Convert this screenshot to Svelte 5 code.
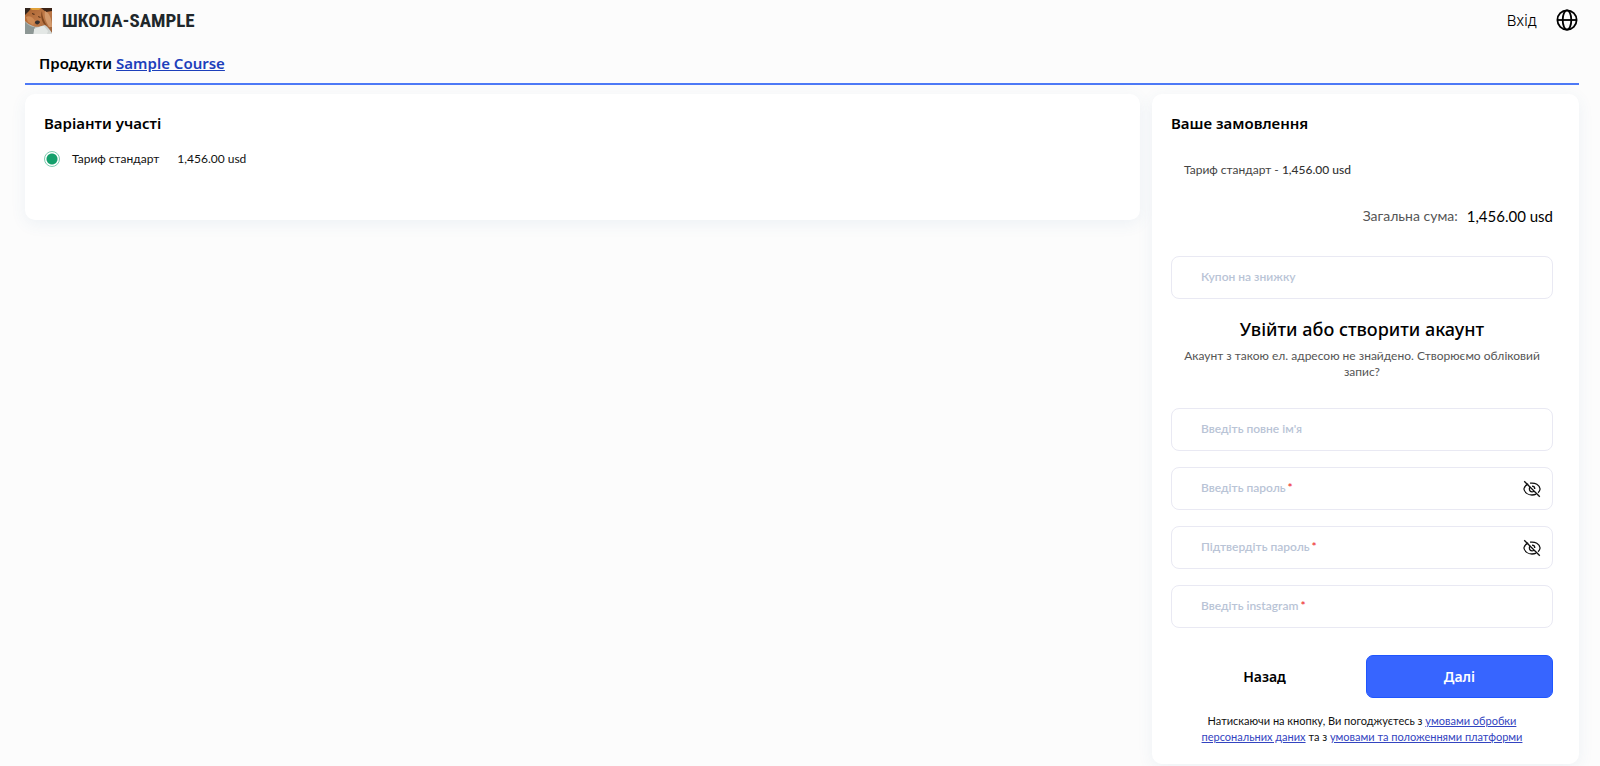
<script>
  let coupon = $state('');
  let plan = $state('standard');
  let values = $state({ name: '', password: '', confirm: '', instagram: '' });
  let visible = $state({ password: false, confirm: false });

  const fields = [
    { id: 'name', label: "Введіть повне ім'я", required: false, secret: false },
    { id: 'password', label: 'Введіть пароль', required: true, secret: true },
    { id: 'confirm', label: 'Підтвердіть пароль', required: true, secret: true },
    { id: 'instagram', label: 'Введіть instagram', required: true, secret: false }
  ];
</script>

<div class="page">
  <header class="topbar">
    <a class="brand" href="#home">
      <svg class="photo" viewBox="0 0 27 26" aria-hidden="true">
        <defs>
          <linearGradient id="fur" x1="0" y1="0" x2="1" y2="1">
            <stop offset="0" stop-color="#a9622f" />
            <stop offset="0.5" stop-color="#c07a48" />
            <stop offset="1" stop-color="#9a6038" />
          </linearGradient>
          <linearGradient id="cloth" x1="0" y1="0" x2="1" y2="1">
            <stop offset="0" stop-color="#9aa3a1" />
            <stop offset="1" stop-color="#d9dddb" />
          </linearGradient>
        </defs>
        <rect width="27" height="26" fill="url(#cloth)" />
        <path d="M0 0H27V25C25 22 23 19 20 17C16 18 12 20 8 18C5 17 2 15 0 13Z" fill="url(#fur)" />
        <path d="M0 0H6L4 3L2 5L0 7Z" fill="#33261e" />
        <path d="M5 0H16L14 2L7 2Z" fill="#e0a13a" />
        <path d="M16 0H27V3L21 4Z" fill="#3c2417" />
        <path d="M20 3C24 5 27 10 27 19L24 19C21 14 19 9 20 3Z" fill="#d39a6c" />
        <path d="M17 3C17 8 19 13 22 18L19 16C17 13 15 8 17 3Z" fill="#80471f" />
        <path d="M1 9C4 7 8 9 10 13L8 17L3 14Z" fill="#cf8b55" />
        <path d="M10 14C11 12 14 12 15 14C14 17 11 17 10 15Z" fill="#37302f" />
        <path d="M7 5L10 6L9 7L7 6Z" fill="#573019" />
        <path d="M13 8L16 9L15 10L13 9Z" fill="#6b3c1d" />
        <path d="M0 14C4 18 7 19 10 19L8 26H0Z" fill="#8d9795" />
        <path d="M9 21C12 20 15 18 19 18L23 23L22 26H9Z" fill="#e3e7e5" />
      </svg>
      <span>ШКОЛА-SAMPLE</span>
    </a>
    <div class="actions">
      <a class="login" href="#login">Вхід</a>
      <button class="icon" type="button" aria-label="Мова">
        <svg class="globe" viewBox="0 0 22 22" aria-hidden="true">
          <g fill="none" stroke="#000" stroke-width="1.8">
            <circle cx="11" cy="11" r="9.6" />
            <ellipse cx="11" cy="11" rx="4.3" ry="9.6" />
            <path d="M1.4 11H20.6" />
          </g>
        </svg>
      </button>
    </div>
  </header>

  <nav class="crumbs">Продукти <a href="#course">Sample Course</a></nav>

  <main class="columns">
    <section class="card options">
      <h2>Варіанти участі</h2>
      <label class="plan">
        <input type="radio" name="plan" value="standard" bind:group={plan} />
        <span>Тариф стандарт</span>
        <span>1,456.00 usd</span>
      </label>
    </section>

    <section class="card order">
      <h2>Ваше замовлення</h2>
      <p class="item">Тариф стандарт - <span>1,456.00 usd</span></p>
      <p class="total"><span>Загальна сума:</span> <strong>1,456.00 usd</strong></p>

      <div class="field">
        <input id="coupon" type="text" placeholder=" " bind:value={coupon} />
        <label for="coupon">Купон на знижку</label>
      </div>

      <h3>Увійти або створити акаунт</h3>
      <p class="hint">Акаунт з такою ел. адресою не знайдено. Створюємо обліковий запис?</p>

      <form onsubmit={(e) => e.preventDefault()}>
        {#each fields as f (f.id)}
          <div class="field">
            <input
              id={f.id}
              type={f.secret && !visible[f.id] ? 'password' : 'text'}
              placeholder=" "
              bind:value={values[f.id]}
            />
            <label for={f.id}>{f.label}{#if f.required}<i>*</i>{/if}</label>
            {#if f.secret}
              <button
                class="icon eye"
                type="button"
                aria-label="Показати пароль"
                onclick={() => (visible[f.id] = !visible[f.id])}
              >
                <svg viewBox="0 0 18 18" aria-hidden="true">
                  <g fill="none" stroke="#111" stroke-width="1.3">
                    <path d="M5.2 3.9C2.9 5 1.3 6.8 .9 9C1.6 12.6 5 15 9 15C10.5 15 11.9 14.7 13.1 14.1" />
                    <path d="M7 3.2C12.3 2.4 16.5 5 17.1 9C16.9 10.4 16.2 11.7 15.1 12.7" />
                    <path d="M7.3 6.8C5.5 8.6 6.4 11.8 9 11.9C9.8 11.9 10.5 11.6 11 11.1M9 6.2C10.7 6.2 11.8 7.5 11.8 9" />
                    <path d="M1.2 1.2L16.8 16.8" />
                  </g>
                </svg>
              </button>
            {/if}
          </div>
        {/each}

        <div class="buttons">
          <button class="back" type="button">Назад</button>
          <button class="next" type="submit">Далі</button>
        </div>
      </form>

      <p class="terms">
        Натискаючи на кнопку, Ви погоджуєтесь з <a href="#privacy">умовами обробки персональних даних</a>
        та з <a href="#terms">умовами та положеннями платформи</a>
      </p>
    </section>
  </main>
</div>

<style>
  :global(body) {
    margin: 0;
    background: #fcfcfc;
  }
  .page {
    box-sizing: border-box;
    padding: 0 21px 3px 25px;
    font: 12px/16px Lato, 'Noto Sans', sans-serif;
    color: #111;
  }
  .page * {
    box-sizing: border-box;
  }
  h2,
  h3,
  p {
    margin: 0;
  }
  .topbar {
    display: flex;
    justify-content: space-between;
    align-items: center;
    height: 42px;
  }
  .brand {
    display: flex;
    align-items: center;
    gap: 10px;
    color: #20272b;
    text-decoration: none;
    font: bold 19px/26px 'Liberation Sans Narrow', 'Roboto Condensed', 'Liberation Sans', sans-serif;
  }
  .photo {
    width: 27px;
    height: 26px;
  }
  .actions {
    display: flex;
    align-items: center;
    gap: 19px;
    padding: 0 1px 3px 0;
  }
  .login {
    padding-top: 3px;
    font: 300 15px/20px Inter, sans-serif;
    color: #000;
    text-decoration: none;
  }
  .icon {
    display: flex;
    padding: 0;
    border: 0;
    background: none;
    cursor: pointer;
  }
  .globe {
    width: 22px;
    height: 22px;
  }
  .crumbs {
    height: 43px;
    padding: 11px 14px;
    border-bottom: 2px solid #4d79f6;
    font: 600 15px/20px 'Noto Sans', sans-serif;
    color: #000;
  }
  .crumbs a {
    color: #1d3fbb;
  }
  .columns {
    display: grid;
    grid-template-columns: minmax(0, 1115fr) minmax(0, 427fr);
    gap: 12px;
    align-items: start;
    padding-top: 9px;
  }
  .card {
    border-radius: 10px;
    background: #fff;
    box-shadow: 0 4px 16px rgba(70, 110, 160, 0.08);
    padding: 19px 26px 19px 19px;
  }
  h2 {
    font: 600 15px/20px 'Noto Sans', sans-serif;
    color: #000;
  }
  .options {
    min-height: 126px;
  }
  .plan {
    display: flex;
    align-items: center;
    margin-top: 18px;
    gap: 18px;
  }
  .plan input {
    appearance: none;
    width: 16px;
    height: 16px;
    margin: 0 -6px 0 0;
    border: 1px solid #7fcbb0;
    border-radius: 50%;
  }
  .plan input:checked {
    background: radial-gradient(circle, #14a06c 5px, #fff 6px);
  }
  .item {
    margin-top: 29px;
    padding-left: 13px;
    color: #444;
  }
  .item span {
    font-weight: 500;
    color: #333;
  }
  .total {
    display: flex;
    justify-content: flex-end;
    align-items: center;
    gap: 9px;
    margin: 28px 0 30px;
    font-size: 14px;
    line-height: 20px;
    color: #555;
  }
  .total strong {
    font-size: 15px;
    font-weight: 400;
    color: #000;
  }
  .field {
    position: relative;
  }
  .field input {
    display: block;
    width: 100%;
    height: 43px;
    padding: 0 48px 0 30px;
    border: 1px solid #e9e9f3;
    border-radius: 8px;
    background: #fff;
    font: inherit;
    color: #111;
    outline: none;
  }
  .field label {
    position: absolute;
    top: 13px;
    left: 30px;
    font-weight: 600;
    color: #b9c4d6;
    pointer-events: none;
  }
  .field input:not(:placeholder-shown) + label {
    display: none;
  }
  .field i {
    margin-left: 2px;
    font-style: normal;
    color: #e33;
  }
  .eye {
    position: absolute;
    top: 13px;
    right: 12px;
  }
  .eye svg {
    width: 18px;
    height: 18px;
  }
  h3 {
    margin-top: 18px;
    font: 500 18px/24px 'Noto Sans', sans-serif;
    text-align: center;
    color: #000;
  }
  .hint {
    margin: 7px 0 28px;
    text-align: center;
    color: #555;
  }
  form {
    display: grid;
    gap: 16px;
  }
  .buttons {
    display: grid;
    grid-template-columns: 1fr 1fr;
    gap: 8px;
    margin-top: 11px;
  }
  .buttons button {
    height: 43px;
    border: 0;
    border-radius: 7px;
    background: none;
    font: 600 14px/20px 'Noto Sans', sans-serif;
    color: #000;
    cursor: pointer;
  }
  .buttons .next {
    border: 1px solid #1f56ff;
    background: #3765ff;
    color: #fff;
  }
  .terms {
    margin-top: 15px;
    padding: 0 20px;
    font-size: 11px;
    text-align: center;
  }
  .terms a {
    color: #3344c0;
  }
</style>
